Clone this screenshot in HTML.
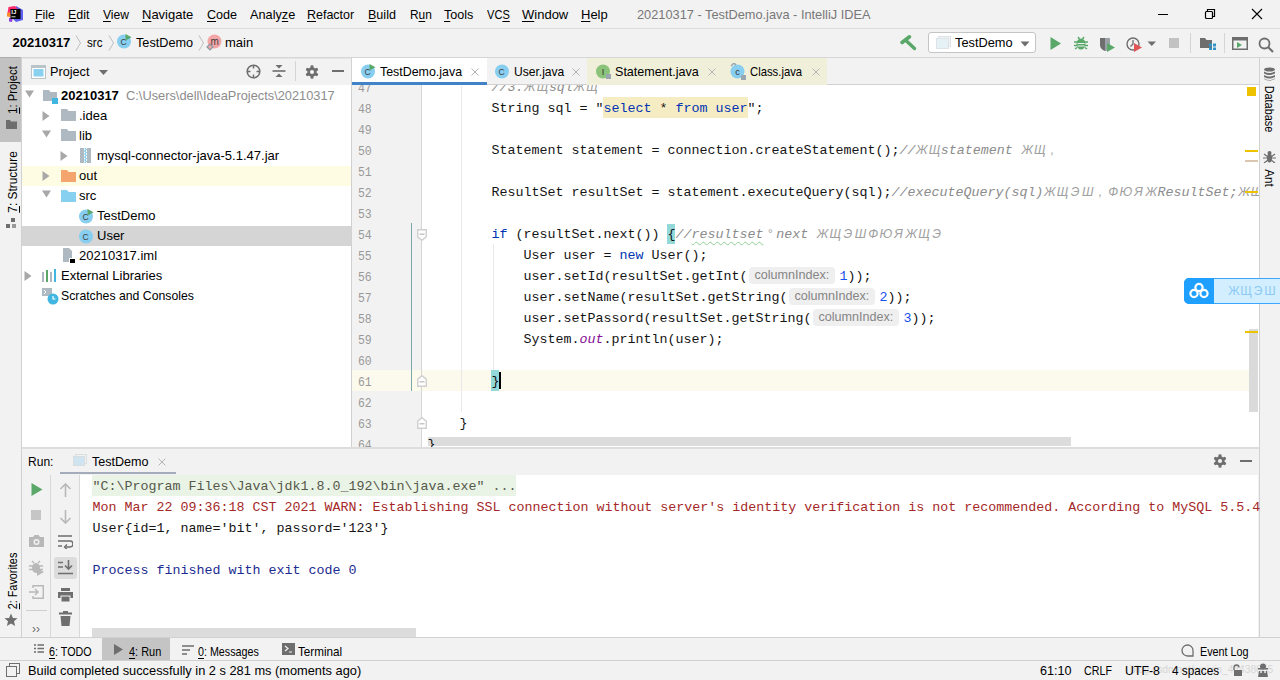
<!DOCTYPE html><html><head><meta charset="utf-8"><style>
html,body{margin:0;padding:0;width:1280px;height:680px;overflow:hidden;background:#f2f2f2;position:relative;font-family:"Liberation Sans",sans-serif}
.u{text-decoration:underline;text-underline-offset:2px}
.kw{color:#0033b3}.str{color:#067d17}.cm{color:#8c8c8c;font-style:italic;-webkit-text-stroke:0}.num{color:#1750eb}.st{color:#871094;font-style:italic}
.hint{display:inline-block;vertical-align:top;}
</style></head><body>
<div style="position:absolute;left:0px;top:0px;width:1280px;height:28px;background:#f2f2f2;"></div>
<div style="position:absolute;left:0px;top:28px;width:1280px;height:1px;background:#dcdcdc;"></div>
<svg style="position:absolute;left:7px;top:6px;" width="16" height="16" viewBox="0 0 16 16"><path d="M9 0 L16 4 L16 14 L9 16 L6 13 Z" fill="#5d5ff0"/><path d="M1.5 1 L8 0 L10.5 3 L3 9 L0.5 7 Z" fill="#fe2b6b"/><path d="M0 7 L3.5 6 L3.5 11 L0 10.5 Z" fill="#fc8a2c"/><path d="M2 12 L6 11 L5 16 L2 15.5 Z" fill="#9440e0"/>
<rect x="3.5" y="3" width="10" height="10" fill="#000"/><text x="4.3" y="8.4" font-family="Liberation Sans" font-weight="bold" font-size="6" fill="#fff">IJ</text><rect x="4.5" y="10.3" width="4" height="1" fill="#ddd"/></svg>
<div style="position:absolute;left:35px;top:5.49px;font:normal 13px/20px 'Liberation Sans', sans-serif;color:#000;white-space:pre;transform:scaleX(0.9524);transform-origin:0 0;"><span class="u">F</span>ile</div>
<div style="position:absolute;left:68px;top:5.49px;font:normal 13px/20px 'Liberation Sans', sans-serif;color:#000;white-space:pre;transform:scaleX(0.9565);transform-origin:0 0;"><span class="u">E</span>dit</div>
<div style="position:absolute;left:103px;top:5.49px;font:normal 13px/20px 'Liberation Sans', sans-serif;color:#000;white-space:pre;transform:scaleX(0.9310);transform-origin:0 0;"><span class="u">V</span>iew</div>
<div style="position:absolute;left:142px;top:5.49px;font:normal 13px/20px 'Liberation Sans', sans-serif;color:#000;white-space:pre;transform:scaleX(1.0000);transform-origin:0 0;"><span class="u">N</span>avigate</div>
<div style="position:absolute;left:207px;top:5.49px;font:normal 13px/20px 'Liberation Sans', sans-serif;color:#000;white-space:pre;transform:scaleX(0.9677);transform-origin:0 0;"><span class="u">C</span>ode</div>
<div style="position:absolute;left:250px;top:5.49px;font:normal 13px/20px 'Liberation Sans', sans-serif;color:#000;white-space:pre;transform:scaleX(0.9783);transform-origin:0 0;">Analy<span class="u">z</span>e</div>
<div style="position:absolute;left:307px;top:5.49px;font:normal 13px/20px 'Liberation Sans', sans-serif;color:#000;white-space:pre;transform:scaleX(0.9600);transform-origin:0 0;"><span class="u">R</span>efactor</div>
<div style="position:absolute;left:368px;top:5.49px;font:normal 13px/20px 'Liberation Sans', sans-serif;color:#000;white-space:pre;transform:scaleX(0.9655);transform-origin:0 0;"><span class="u">B</span>uild</div>
<div style="position:absolute;left:410px;top:5.49px;font:normal 13px/20px 'Liberation Sans', sans-serif;color:#000;white-space:pre;transform:scaleX(0.9167);transform-origin:0 0;">R<span class="u">u</span>n</div>
<div style="position:absolute;left:444px;top:5.49px;font:normal 13px/20px 'Liberation Sans', sans-serif;color:#000;white-space:pre;transform:scaleX(0.9677);transform-origin:0 0;"><span class="u">T</span>ools</div>
<div style="position:absolute;left:487px;top:5.49px;font:normal 13px/20px 'Liberation Sans', sans-serif;color:#000;white-space:pre;transform:scaleX(0.8519);transform-origin:0 0;">VC<span class="u">S</span></div>
<div style="position:absolute;left:522px;top:5.49px;font:normal 13px/20px 'Liberation Sans', sans-serif;color:#000;white-space:pre;transform:scaleX(1.0000);transform-origin:0 0;"><span class="u">W</span>indow</div>
<div style="position:absolute;left:581px;top:5.49px;font:normal 13px/20px 'Liberation Sans', sans-serif;color:#000;white-space:pre;transform:scaleX(1.0000);transform-origin:0 0;"><span class="u">H</span>elp</div>
<div style="position:absolute;left:637px;top:5.49px;font:normal 13px/20px 'Liberation Sans', sans-serif;color:#787878;white-space:pre;transform:scaleX(0.9832);transform-origin:0 0;">20210317 - TestDemo.java - IntelliJ IDEA</div>
<svg style="position:absolute;left:1150px;top:6px;" width="130" height="18" viewBox="0 0 130 18"><line x1="8" y1="8.5" x2="18" y2="8.5" stroke="#000" stroke-width="1"/>
<rect x="55.5" y="5.5" width="7" height="7" fill="none" stroke="#000" stroke-width="1.2" rx="1"/><path d="M57.5 5.5 V3.5 H64.5 V10.5 H62.5" fill="none" stroke="#000" stroke-width="1.2"/>
<path d="M102 3 L112 13 M112 3 L102 13" stroke="#000" stroke-width="1.1"/></svg>
<div style="position:absolute;left:0px;top:57px;width:1280px;height:1px;background:#d6d6d6;"></div>
<div style="position:absolute;left:12.5px;top:33.49px;font:bold 13px/20px 'Liberation Sans', sans-serif;color:#000;white-space:pre;">20210317</div>
<svg style="position:absolute;left:74.5px;top:35px;" width="7" height="16" viewBox="0 0 7 16"><path d="M1 0.5 L5.5 8 L1 15.5" fill="none" stroke="#bdbdbd" stroke-width="1"/></svg>
<div style="position:absolute;left:87px;top:33.49px;font:normal 13px/20px 'Liberation Sans', sans-serif;color:#000;white-space:pre;transform:scaleX(0.8889);transform-origin:0 0;">src</div>
<svg style="position:absolute;left:107.5px;top:35px;" width="7" height="16" viewBox="0 0 7 16"><path d="M1 0.5 L5.5 8 L1 15.5" fill="none" stroke="#bdbdbd" stroke-width="1"/></svg>
<svg style="position:absolute;left:117px;top:34px;" width="15" height="15" viewBox="0 0 15 15"><circle cx="7" cy="7.5" r="7" fill="#87cef0"/><text x="6.6" y="10.8" text-anchor="middle" font-family="Liberation Sans" font-size="8.5" fill="#3d3d3d">C</text><path d="M8.5 0 L14.5 3.3 L8.5 6.6 Z" fill="#59a869"/></svg>
<div style="position:absolute;left:135.5px;top:33.49px;font:normal 13px/20px 'Liberation Sans', sans-serif;color:#000;white-space:pre;transform:scaleX(0.9746);transform-origin:0 0;">TestDemo</div>
<svg style="position:absolute;left:197.5px;top:35px;" width="7" height="16" viewBox="0 0 7 16"><path d="M1 0.5 L5.5 8 L1 15.5" fill="none" stroke="#bdbdbd" stroke-width="1"/></svg>
<svg style="position:absolute;left:206px;top:34px;" width="17" height="17" viewBox="0 0 17 17"><circle cx="8.5" cy="7.5" r="7" fill="#f4a6a6"/><text x="8.7" y="10.6" text-anchor="middle" font-family="Liberation Sans" font-size="10" fill="#3d3d3d">m</text><path d="M1 13 L4 10 L7 13 L4 16Z" fill="#f4a6a6" stroke="#8a9aa4" stroke-width="1.2"/></svg>
<div style="position:absolute;left:225px;top:33.49px;font:normal 13px/20px 'Liberation Sans', sans-serif;color:#000;white-space:pre;">main</div>
<svg style="position:absolute;left:896px;top:32px;" width="24" height="22" viewBox="0 0 24 22"><path d="M6 10.5 L13.5 4.8" stroke="#59a869" stroke-width="3.6" stroke-linecap="round"/><path d="M10 8.5 L18.5 16.5" stroke="#59a869" stroke-width="3.4" stroke-linecap="round"/></svg>
<div style="position:absolute;left:928px;top:32px;width:108px;height:21px;background:#fff;box-sizing:border-box;border:1px solid #c4c4c4;border-radius:3px"></div>
<svg style="position:absolute;left:936px;top:36px;" width="15" height="13" viewBox="0 0 15 13"><rect x="2.5" y="0.5" width="12" height="10" fill="#f2f2f2" stroke="#dde3e6"/><rect x="0.5" y="2.5" width="12" height="10" fill="#e6f1f6" stroke="#dde3e6"/></svg>
<div style="position:absolute;left:955px;top:33.49px;font:normal 13px/20px 'Liberation Sans', sans-serif;color:#000;white-space:pre;transform:scaleX(0.9831);transform-origin:0 0;">TestDemo</div>
<svg style="position:absolute;left:1020px;top:41px;" width="10" height="6" viewBox="0 0 10 6"><path d="M0.5 0.5 H9.5 L5 5.5 Z" fill="#6e6e6e"/></svg>
<svg style="position:absolute;left:1050px;top:37px;" width="12" height="13" viewBox="0 0 12 13"><path d="M0.5 0 L11 6.5 L0.5 13 Z" fill="#59a869"/></svg>
<svg style="position:absolute;left:1074px;top:36px;" width="14" height="14" viewBox="0 0 14 14"><path d="M4 1 L5.5 3 M10 1 L8.5 3" stroke="#59a869" stroke-width="1.5"/><ellipse cx="7" cy="8" rx="4.5" ry="5.5" fill="#59a869"/><path d="M0 6 H14 M0 9.5 H14 M1 13 L3 11.5 M13 13 L11 11.5" stroke="#59a869" stroke-width="1.4"/><path d="M3.5 7.5 H10.5 M3.5 10 H10.5" stroke="#f2f2f2" stroke-width="1"/></svg>
<svg style="position:absolute;left:1099px;top:37px;" width="17" height="15" viewBox="0 0 17 15"><path d="M1 1 H11 V8 Q11 12 6 14 Q1 12 1 8 Z" fill="#6e6e6e"/><path d="M6 1 H11 V8 Q11 12 6 14 Z" fill="#9aa0a6"/><path d="M8 6 L16 10.5 L8 15 Z" fill="#59a869"/></svg>
<svg style="position:absolute;left:1126px;top:37px;" width="17" height="15" viewBox="0 0 17 15"><circle cx="7" cy="7" r="6" fill="none" stroke="#6e6e6e" stroke-width="1.4"/><path d="M7 3 V7 L4.5 9.5" stroke="#6e6e6e" stroke-width="1.3" fill="none"/><path d="M8 6 L16 10.5 L8 15 Z" fill="#e05555"/></svg>
<svg style="position:absolute;left:1147px;top:41px;" width="10" height="6" viewBox="0 0 10 6"><path d="M0.5 0.5 H9 L4.75 5 Z" fill="#6e6e6e"/></svg>
<div style="position:absolute;left:1169px;top:38px;width:10px;height:10px;background:#c2c2c2;"></div>
<div style="position:absolute;left:1190px;top:33px;width:1px;height:20px;background:#d4d4d4;"></div>
<svg style="position:absolute;left:1200px;top:37px;" width="16" height="13" viewBox="0 0 16 13"><path d="M0 1 H5 L6.5 3 H12 V11 H0 Z" fill="#6e6e6e"/><rect x="9" y="6.5" width="3" height="3" fill="#3592c4"/><rect x="13" y="6.5" width="3" height="3" fill="#3592c4"/><rect x="9" y="10.5" width="3" height="3" fill="#3592c4"/><rect x="13" y="10.5" width="3" height="3" fill="#3592c4"/></svg>
<div style="position:absolute;left:1224px;top:33px;width:1px;height:20px;background:#d4d4d4;"></div>
<svg style="position:absolute;left:1232px;top:37px;" width="16" height="13" viewBox="0 0 16 13"><rect x="0.75" y="0.75" width="14.5" height="11.5" fill="none" stroke="#6e6e6e" stroke-width="1.5"/><rect x="1" y="1" width="14" height="2.5" fill="#6e6e6e"/><path d="M5 5 L10 8 L5 11 Z" fill="#59a869"/></svg>
<svg style="position:absolute;left:1258px;top:37px;" width="16" height="16" viewBox="0 0 16 16"><circle cx="6.5" cy="6.5" r="5" fill="none" stroke="#6e6e6e" stroke-width="1.8"/><path d="M10 10 L15 15" stroke="#6e6e6e" stroke-width="2.2"/></svg>
<div style="position:absolute;left:0px;top:58px;width:21px;height:580px;background:#f2f2f2;"></div>
<div style="position:absolute;left:21px;top:58px;width:1px;height:580px;background:#d1d1d1;"></div>
<div style="position:absolute;left:0px;top:57px;width:21px;height:85px;background:#c2c2c2;"></div>
<div style="position:absolute;left:0px;top:57px;width:21px;height:1px;background:#adadad;"></div>
<div style="position:absolute;left:12.5px;top:89.8px;width:0;height:0"><div style="position:absolute;left:0;top:0;transform:rotate(-90deg) scaleX(0.8655) translate(-50%,-50%);transform-origin:0 0;font:13px/20px 'Liberation Sans', sans-serif;color:#000;white-space:pre"><span class="u">1</span>: Project</div></div>
<svg style="position:absolute;left:6px;top:120px;" width="12" height="10" viewBox="0 0 12 10"><path d="M0 0 H4 L5 1.5 H11 V9 H0 Z" fill="#6e6e6e"/></svg>
<div style="position:absolute;left:12.5px;top:182.4px;width:0;height:0"><div style="position:absolute;left:0;top:0;transform:rotate(-90deg) scaleX(0.9149) translate(-50%,-50%);transform-origin:0 0;font:13px/20px 'Liberation Sans', sans-serif;color:#000;white-space:pre"><span class="u">7</span>: Structure</div></div>
<svg style="position:absolute;left:6px;top:218px;" width="12" height="11" viewBox="0 0 12 11"><rect x="5" y="0" width="4" height="4" fill="#6e6e6e"/><rect x="0" y="6" width="4" height="4" fill="#6e6e6e"/><rect x="6" y="6" width="4" height="4" fill="#9a9a9a"/></svg>
<div style="position:absolute;left:12.5px;top:580.7px;width:0;height:0"><div style="position:absolute;left:0;top:0;transform:rotate(-90deg) scaleX(0.8338) translate(-50%,-50%);transform-origin:0 0;font:13px/20px 'Liberation Sans', sans-serif;color:#000;white-space:pre"><span class="u">2</span>: Favorites</div></div>
<svg style="position:absolute;left:4px;top:613px;" width="14" height="14" viewBox="0 0 14 14"><path d="M7 0.5 L8.9 5 L13.5 5.3 L10 8.3 L11.1 13 L7 10.5 L2.9 13 L4 8.3 L0.5 5.3 L5.1 5 Z" fill="#6e6e6e"/></svg>
<div style="position:absolute;left:22px;top:58px;width:329px;height:27px;background:#f2f2f2;"></div>
<div style="position:absolute;left:22px;top:58px;width:329px;height:1px;background:#e6e6e6;"></div>
<div style="position:absolute;left:22px;top:85px;width:329px;height:362px;background:#ffffff;"></div>
<div style="position:absolute;left:351px;top:58px;width:1px;height:389px;background:#d1d1d1;"></div>
<svg style="position:absolute;left:31px;top:65px;" width="15" height="14" viewBox="0 0 15 14"><rect x="0.5" y="0.5" width="14" height="13" fill="#fff" stroke="#b9c4c8"/><rect x="0.5" y="0.5" width="14" height="2.5" fill="#b9c4c8"/><rect x="2.5" y="4" width="10" height="7.5" fill="#89d1ef"/></svg>
<div style="position:absolute;left:50px;top:62.49px;font:normal 13px/20px 'Liberation Sans', sans-serif;color:#000;white-space:pre;transform:scaleX(0.9756);transform-origin:0 0;">Project</div>
<svg style="position:absolute;left:99px;top:70px;" width="9" height="5" viewBox="0 0 9 5"><path d="M0 0 H9 L4.5 5 Z" fill="#6e6e6e"/></svg>
<svg style="position:absolute;left:245px;top:63px;" width="17" height="17" viewBox="0 0 17 17"><circle cx="8.5" cy="8.5" r="6.3" fill="none" stroke="#6e6e6e" stroke-width="1.6"/><path d="M8.5 2 V5.5 M8.5 11.5 V15 M2 8.5 H5.5 M11.5 8.5 H15" stroke="#6e6e6e" stroke-width="1.5"/></svg>
<svg style="position:absolute;left:272px;top:63px;" width="14" height="16" viewBox="0 0 14 16"><path d="M3.5 2 H10.5 L7 5.5 Z M3.5 14 H10.5 L7 10.5 Z" fill="#6e6e6e"/><rect x="0.5" y="7.2" width="13" height="1.6" fill="#6e6e6e"/></svg>
<div style="position:absolute;left:295px;top:61px;width:1px;height:20px;background:#d4d4d4;"></div>
<svg style="position:absolute;left:305px;top:64.5px;" width="14" height="14" viewBox="0 0 14 14"><rect x="5.7" y="0.6" width="2.6" height="12.8" fill="#6e6e6e" transform="rotate(0 7 7)"/><rect x="5.7" y="0.6" width="2.6" height="12.8" fill="#6e6e6e" transform="rotate(60 7 7)"/><rect x="5.7" y="0.6" width="2.6" height="12.8" fill="#6e6e6e" transform="rotate(120 7 7)"/><rect x="5.7" y="0.6" width="2.6" height="12.8" fill="#6e6e6e" transform="rotate(180 7 7)"/><rect x="5.7" y="0.6" width="2.6" height="12.8" fill="#6e6e6e" transform="rotate(240 7 7)"/><rect x="5.7" y="0.6" width="2.6" height="12.8" fill="#6e6e6e" transform="rotate(300 7 7)"/><circle cx="7" cy="7" r="4.7" fill="#6e6e6e"/><circle cx="7" cy="7" r="2.1" fill="#f2f2f2"/></svg>
<div style="position:absolute;left:332px;top:70px;width:12px;height:2px;background:#6e6e6e;"></div>
<div style="position:absolute;left:22px;top:166px;width:329px;height:20px;background:#fefde3;"></div>
<div style="position:absolute;left:22px;top:226px;width:329px;height:20px;background:#d5d5d5;"></div>
<svg style="position:absolute;left:25px;top:90px;" width="9" height="8" viewBox="0 0 9 8"><path d="M0 0.5 H9 L4.5 7.5 Z" fill="#a8a8a8"/></svg>
<svg style="position:absolute;left:43px;top:90px;" width="16" height="15" viewBox="0 0 16 15"><path d="M0 0 H6 L7.5 2 H14 V11 H0 Z" fill="#afb9c1"/><rect x="9" y="8" width="6" height="6" fill="#40b6e0"/></svg>
<div style="position:absolute;left:61px;top:86.49px;font:bold 13px/20px 'Liberation Sans', sans-serif;color:#000;white-space:pre;">20210317</div>
<div style="position:absolute;left:126px;top:86.49px;font:normal 13px/20px 'Liberation Sans', sans-serif;color:#8c8c8c;white-space:pre;transform:scaleX(0.9858);transform-origin:0 0;">C:\Users\dell\IdeaProjects\20210317</div>
<svg style="position:absolute;left:42px;top:111px;" width="8" height="10" viewBox="0 0 8 10"><path d="M0.5 0 L7.5 5 L0.5 10 Z" fill="#a8a8a8"/></svg>
<svg style="position:absolute;left:61px;top:109px;" width="15" height="12" viewBox="0 0 15 12"><path d="M0 0 H6 L7.5 2 H15 V12 H0 Z" fill="#afb9c1"/></svg>
<div style="position:absolute;left:79px;top:106.49px;font:normal 13px/20px 'Liberation Sans', sans-serif;color:#000;white-space:pre;">.idea</div>
<svg style="position:absolute;left:42px;top:130px;" width="9" height="8" viewBox="0 0 9 8"><path d="M0 0.5 H9 L4.5 7.5 Z" fill="#a8a8a8"/></svg>
<svg style="position:absolute;left:61px;top:129px;" width="15" height="12" viewBox="0 0 15 12"><path d="M0 0 H6 L7.5 2 H15 V12 H0 Z" fill="#afb9c1"/></svg>
<div style="position:absolute;left:79px;top:126.49px;font:normal 13px/20px 'Liberation Sans', sans-serif;color:#000;white-space:pre;">lib</div>
<svg style="position:absolute;left:60px;top:151px;" width="8" height="10" viewBox="0 0 8 10"><path d="M0.5 0 L7.5 5 L0.5 10 Z" fill="#a8a8a8"/></svg>
<svg style="position:absolute;left:80px;top:148px;" width="12" height="15" viewBox="0 0 12 15"><rect x="0" y="0" width="11" height="15" fill="#afb9c1"/><rect x="4" y="0" width="3" height="15" fill="#fff"/><path d="M4.5 0 L6.5 1.5 L4.5 3 L6.5 4.5 L4.5 6 L6.5 7.5 L4.5 9 L6.5 10.5 L4.5 12 L6.5 13.5 L4.5 15" stroke="#40b6e0" stroke-width="0.9" fill="none"/></svg>
<div style="position:absolute;left:97px;top:146.49px;font:normal 13px/20px 'Liberation Sans', sans-serif;color:#000;white-space:pre;">mysql-connector-java-5.1.47.jar</div>
<svg style="position:absolute;left:42px;top:171px;" width="8" height="10" viewBox="0 0 8 10"><path d="M0.5 0 L7.5 5 L0.5 10 Z" fill="#a8a8a8"/></svg>
<svg style="position:absolute;left:61px;top:170px;" width="15" height="12" viewBox="0 0 15 12"><path d="M0 0 H6 L7.5 2 H15 V12 H0 Z" fill="#f4a56e"/></svg>
<div style="position:absolute;left:79px;top:166.49px;font:normal 13px/20px 'Liberation Sans', sans-serif;color:#000;white-space:pre;">out</div>
<svg style="position:absolute;left:42px;top:190px;" width="9" height="8" viewBox="0 0 9 8"><path d="M0 0.5 H9 L4.5 7.5 Z" fill="#a8a8a8"/></svg>
<svg style="position:absolute;left:61px;top:190px;" width="15" height="12" viewBox="0 0 15 12"><path d="M0 0 H6 L7.5 2 H15 V12 H0 Z" fill="#88d0f0"/></svg>
<div style="position:absolute;left:79px;top:186.49px;font:normal 13px/20px 'Liberation Sans', sans-serif;color:#000;white-space:pre;">src</div>
<svg style="position:absolute;left:79px;top:209px;" width="15" height="15" viewBox="0 0 15 15"><circle cx="7" cy="7.5" r="7" fill="#87cef0"/><text x="6.6" y="10.8" text-anchor="middle" font-family="Liberation Sans" font-size="8.5" fill="#3d3d3d">C</text><path d="M8.5 0 L14.5 3.3 L8.5 6.6 Z" fill="#59a869"/></svg>
<div style="position:absolute;left:97px;top:206.49px;font:normal 13px/20px 'Liberation Sans', sans-serif;color:#000;white-space:pre;">TestDemo</div>
<svg style="position:absolute;left:79px;top:229px;" width="15" height="15" viewBox="0 0 15 15"><circle cx="7" cy="7.5" r="7" fill="#87cef0"/><text x="6.6" y="10.8" text-anchor="middle" font-family="Liberation Sans" font-size="8.5" fill="#3d3d3d">C</text></svg>
<div style="position:absolute;left:97px;top:226.49px;font:normal 13px/20px 'Liberation Sans', sans-serif;color:#000;white-space:pre;">User</div>
<svg style="position:absolute;left:62px;top:248px;" width="14" height="16" viewBox="0 0 14 16"><path d="M1 0 H7 L10 3 V14 H1 Z" fill="#afb9c1"/><rect x="7" y="10" width="7" height="6" fill="#fff"/><rect x="8" y="11" width="5" height="4" fill="#000"/></svg>
<div style="position:absolute;left:79px;top:246.49px;font:normal 13px/20px 'Liberation Sans', sans-serif;color:#000;white-space:pre;">20210317.iml</div>
<svg style="position:absolute;left:24px;top:271px;" width="8" height="10" viewBox="0 0 8 10"><path d="M0.5 0 L7.5 5 L0.5 10 Z" fill="#a8a8a8"/></svg>
<svg style="position:absolute;left:42px;top:269px;" width="16" height="14" viewBox="0 0 16 14"><rect x="0" y="3" width="2" height="10" fill="#afb9c1"/><rect x="4" y="1" width="2" height="12" fill="#59a869"/><rect x="8" y="3" width="2" height="10" fill="#afb9c1"/><rect x="12" y="0" width="2" height="13" fill="#40b6e0"/></svg>
<div style="position:absolute;left:61px;top:266.49px;font:normal 13px/20px 'Liberation Sans', sans-serif;color:#000;white-space:pre;">External Libraries</div>
<svg style="position:absolute;left:42px;top:288px;" width="17" height="17" viewBox="0 0 17 17"><path d="M0 0 H10 V8 H0 Z" fill="#afb9c1"/><path d="M2 2 L4 4 L2 6" stroke="#fff" fill="none"/><circle cx="11" cy="11" r="5.5" fill="#40b6e0"/><path d="M11 8 V11 H13.5" stroke="#fff" fill="none" stroke-width="1.2"/></svg>
<div style="position:absolute;left:61px;top:286.49px;font:normal 13px/20px 'Liberation Sans', sans-serif;color:#000;white-space:pre;transform:scaleX(0.9433);transform-origin:0 0;">Scratches and Consoles</div>
<div style="position:absolute;left:1259px;top:58px;width:1px;height:580px;background:#d1d1d1;"></div>
<div style="position:absolute;left:1260px;top:58px;width:20px;height:580px;background:#f2f2f2;"></div>
<svg style="position:absolute;left:1263px;top:67px;" width="13" height="14" viewBox="0 0 13 14"><ellipse cx="6.5" cy="2.5" rx="5.5" ry="2" fill="#6e6e6e"/><path d="M1 4.5 Q6.5 7.5 12 4.5 V6.5 Q6.5 9.5 1 6.5 Z M1 8 Q6.5 11 12 8 V10 Q6.5 13 1 10 Z M1 11.5 Q6.5 14.5 12 11.5 V12 Q6.5 15 1 12Z" fill="#6e6e6e"/></svg>
<div style="position:absolute;left:1269px;top:109.2px;width:0;height:0"><div style="position:absolute;left:0;top:0;transform:rotate(90deg) scaleX(0.8393) translate(-50%,-50%);transform-origin:0 0;font:13px/20px 'Liberation Sans', sans-serif;color:#000;white-space:pre">Database</div></div>
<svg style="position:absolute;left:1263px;top:151px;" width="13" height="12" viewBox="0 0 13 12"><ellipse cx="6.5" cy="7" rx="2.5" ry="4.5" fill="#6e6e6e"/><circle cx="6.5" cy="2" r="2" fill="#6e6e6e"/><path d="M1 3 L5 6 M12 3 L8 6 M0 7 H13 M1 12 L5 9 M12 12 L8 9" stroke="#6e6e6e" stroke-width="1.2"/></svg>
<div style="position:absolute;left:1269px;top:178.4px;width:0;height:0"><div style="position:absolute;left:0;top:0;transform:rotate(90deg) scaleX(0.9000) translate(-50%,-50%);transform-origin:0 0;font:13px/20px 'Liberation Sans', sans-serif;color:#000;white-space:pre">Ant</div></div>
<div style="position:absolute;left:352px;top:58px;width:907px;height:27px;background:#f2f2f2;"></div>
<div style="position:absolute;left:352px;top:84px;width:907px;height:1px;background:#d1d1d1;"></div>
<div style="position:absolute;left:352px;top:85px;width:907px;height:362px;overflow:hidden"><div style="position:absolute;left:-352px;top:-85px;width:1280px;height:680px">
<div style="position:absolute;left:352px;top:85px;width:907px;height:362px;background:#ffffff;"></div>
<div style="position:absolute;left:352px;top:85px;width:70px;height:362px;background:#f2f2f2;"></div>
<div style="position:absolute;left:352px;top:370px;width:906px;height:21px;background:#fcfaed;"></div>
<div style="position:absolute;left:421px;top:85px;width:1px;height:362px;background:#d6d6d6;"></div>
<div style="position:absolute;left:461px;top:86px;width:1px;height:326px;background:#e8e8e8;"></div>
<div style="position:absolute;left:493px;top:244px;width:1px;height:126px;background:#e8e8e8;"></div>
<div style="position:absolute;left:411px;top:223px;width:1px;height:168px;background:#7ea7ab;"></div>
<svg style="position:absolute;left:417px;top:229px;" width="10" height="12" viewBox="0 0 10 12"><path d="M0.75 0.75 V7.8 L5 11.25 L9.25 7.8 V0.75 Z" fill="#fff" stroke="#cfcfcf" stroke-width="1.4"/><path d="M2.5 5.2 H7.5" stroke="#b8b8b8" stroke-width="1.2"/></svg>
<svg style="position:absolute;left:417px;top:375px;" width="10" height="12" viewBox="0 0 10 12"><path d="M0.75 11.25 V4.2 L5 0.75 L9.25 4.2 V11.25 Z" fill="#fff" stroke="#cfcfcf" stroke-width="1.4"/><path d="M2.5 6.8 H7.5" stroke="#b8b8b8" stroke-width="1.2"/></svg>
<svg style="position:absolute;left:417px;top:417px;" width="10" height="12" viewBox="0 0 10 12"><path d="M0.75 11.25 V4.2 L5 0.75 L9.25 4.2 V11.25 Z" fill="#fff" stroke="#cfcfcf" stroke-width="1.4"/><path d="M2.5 6.8 H7.5" stroke="#b8b8b8" stroke-width="1.2"/></svg>
<div style="position:absolute;left:357.5px;top:78px;width:40px;height:21px;font:13px/21px 'Liberation Mono', monospace;color:#999;white-space:pre;transform:scaleX(0.88);transform-origin:0 0">47</div>
<div style="position:absolute;left:357.5px;top:99px;width:40px;height:21px;font:13px/21px 'Liberation Mono', monospace;color:#999;white-space:pre;transform:scaleX(0.88);transform-origin:0 0">48</div>
<div style="position:absolute;left:357.5px;top:120px;width:40px;height:21px;font:13px/21px 'Liberation Mono', monospace;color:#999;white-space:pre;transform:scaleX(0.88);transform-origin:0 0">49</div>
<div style="position:absolute;left:357.5px;top:141px;width:40px;height:21px;font:13px/21px 'Liberation Mono', monospace;color:#999;white-space:pre;transform:scaleX(0.88);transform-origin:0 0">50</div>
<div style="position:absolute;left:357.5px;top:162px;width:40px;height:21px;font:13px/21px 'Liberation Mono', monospace;color:#999;white-space:pre;transform:scaleX(0.88);transform-origin:0 0">51</div>
<div style="position:absolute;left:357.5px;top:183px;width:40px;height:21px;font:13px/21px 'Liberation Mono', monospace;color:#999;white-space:pre;transform:scaleX(0.88);transform-origin:0 0">52</div>
<div style="position:absolute;left:357.5px;top:204px;width:40px;height:21px;font:13px/21px 'Liberation Mono', monospace;color:#999;white-space:pre;transform:scaleX(0.88);transform-origin:0 0">53</div>
<div style="position:absolute;left:357.5px;top:225px;width:40px;height:21px;font:13px/21px 'Liberation Mono', monospace;color:#999;white-space:pre;transform:scaleX(0.88);transform-origin:0 0">54</div>
<div style="position:absolute;left:357.5px;top:246px;width:40px;height:21px;font:13px/21px 'Liberation Mono', monospace;color:#999;white-space:pre;transform:scaleX(0.88);transform-origin:0 0">55</div>
<div style="position:absolute;left:357.5px;top:267px;width:40px;height:21px;font:13px/21px 'Liberation Mono', monospace;color:#999;white-space:pre;transform:scaleX(0.88);transform-origin:0 0">56</div>
<div style="position:absolute;left:357.5px;top:288px;width:40px;height:21px;font:13px/21px 'Liberation Mono', monospace;color:#999;white-space:pre;transform:scaleX(0.88);transform-origin:0 0">57</div>
<div style="position:absolute;left:357.5px;top:309px;width:40px;height:21px;font:13px/21px 'Liberation Mono', monospace;color:#999;white-space:pre;transform:scaleX(0.88);transform-origin:0 0">58</div>
<div style="position:absolute;left:357.5px;top:330px;width:40px;height:21px;font:13px/21px 'Liberation Mono', monospace;color:#999;white-space:pre;transform:scaleX(0.88);transform-origin:0 0">59</div>
<div style="position:absolute;left:357.5px;top:351px;width:40px;height:21px;font:13px/21px 'Liberation Mono', monospace;color:#999;white-space:pre;transform:scaleX(0.88);transform-origin:0 0">60</div>
<div style="position:absolute;left:357.5px;top:372px;width:40px;height:21px;font:13px/21px 'Liberation Mono', monospace;color:#999;white-space:pre;transform:scaleX(0.88);transform-origin:0 0">61</div>
<div style="position:absolute;left:357.5px;top:393px;width:40px;height:21px;font:13px/21px 'Liberation Mono', monospace;color:#999;white-space:pre;transform:scaleX(0.88);transform-origin:0 0">62</div>
<div style="position:absolute;left:357.5px;top:414px;width:40px;height:21px;font:13px/21px 'Liberation Mono', monospace;color:#999;white-space:pre;transform:scaleX(0.88);transform-origin:0 0">63</div>
<div style="position:absolute;left:357.5px;top:435px;width:40px;height:21px;font:13px/21px 'Liberation Mono', monospace;color:#999;white-space:pre;transform:scaleX(0.88);transform-origin:0 0">64</div>
<div style="position:absolute;left:428px;top:437px;width:643px;height:9px;background:#dcdcdc;"></div>
<div style="position:absolute;left:603px;top:97px;width:145px;height:21px;background:#f6ecc4;"></div>
<div style="position:absolute;left:667px;top:224px;width:8px;height:20px;background:#93d9d9;"></div>
<div style="position:absolute;left:491px;top:370px;width:8px;height:21px;background:#93d9d9;"></div>
<div style="position:absolute;left:427.5px;top:77px;height:21px;font:13.33px/21px 'Liberation Mono', monospace;color:#141414;white-space:pre">        <span class="cm">//3.<span style="display:inline-block;width:12.7px;text-align:center;font-family:'Liberation Sans';font-size:12.5px;color:#a0a0a0;-webkit-text-stroke:0">Ж</span><span style="display:inline-block;width:12.7px;text-align:center;font-family:'Liberation Sans';font-size:12.5px;color:#a0a0a0;-webkit-text-stroke:0">Щ</span>sql<span style="display:inline-block;width:12.7px;text-align:center;font-family:'Liberation Sans';font-size:12.5px;color:#a0a0a0;-webkit-text-stroke:0">Ж</span><span style="display:inline-block;width:12.7px;text-align:center;font-family:'Liberation Sans';font-size:12.5px;color:#a0a0a0;-webkit-text-stroke:0">Щ</span></span></div>
<div style="position:absolute;left:427.5px;top:98px;height:21px;font:13.33px/21px 'Liberation Mono', monospace;color:#141414;white-space:pre">        String sql = "<span style="color:#0033b3">select</span> * <span style="color:#0033b3">from</span> <span style="color:#0033b3">user</span>";</div>
<div style="position:absolute;left:427.5px;top:140px;height:21px;font:13.33px/21px 'Liberation Mono', monospace;color:#141414;white-space:pre">        Statement statement = connection.createStatement();<span class="cm">//<span style="display:inline-block;width:12.7px;text-align:center;font-family:'Liberation Sans';font-size:12.5px;color:#a0a0a0;-webkit-text-stroke:0">Ж</span><span style="display:inline-block;width:12.7px;text-align:center;font-family:'Liberation Sans';font-size:12.5px;color:#a0a0a0;-webkit-text-stroke:0">Щ</span>statement <span style="display:inline-block;width:12.7px;text-align:center;font-family:'Liberation Sans';font-size:12.5px;color:#a0a0a0;-webkit-text-stroke:0">Ж</span><span style="display:inline-block;width:12.7px;text-align:center;font-family:'Liberation Sans';font-size:12.5px;color:#a0a0a0;-webkit-text-stroke:0">Щ</span><span style="display:inline-block;width:12.7px;text-align:center;font-family:'Liberation Sans';font-size:12px;color:#a0a0a0;-webkit-text-stroke:0">,</span></span></div>
<div style="position:absolute;left:427.5px;top:182px;height:21px;font:13.33px/21px 'Liberation Mono', monospace;color:#141414;white-space:pre">        ResultSet resultSet = statement.executeQuery(sql);<span class="cm">//executeQuery(sql)<span style="display:inline-block;width:12.7px;text-align:center;font-family:'Liberation Sans';font-size:12.5px;color:#a0a0a0;-webkit-text-stroke:0">Ж</span><span style="display:inline-block;width:12.7px;text-align:center;font-family:'Liberation Sans';font-size:12.5px;color:#a0a0a0;-webkit-text-stroke:0">Щ</span><span style="display:inline-block;width:12.7px;text-align:center;font-family:'Liberation Sans';font-size:12.5px;color:#a0a0a0;-webkit-text-stroke:0">Э</span><span style="display:inline-block;width:12.7px;text-align:center;font-family:'Liberation Sans';font-size:12.5px;color:#a0a0a0;-webkit-text-stroke:0">Ш</span><span style="display:inline-block;width:12.7px;text-align:center;font-family:'Liberation Sans';font-size:12px;color:#a0a0a0;-webkit-text-stroke:0">,</span><span style="display:inline-block;width:12.7px;text-align:center;font-family:'Liberation Sans';font-size:12.5px;color:#a0a0a0;-webkit-text-stroke:0">Ф</span><span style="display:inline-block;width:12.7px;text-align:center;font-family:'Liberation Sans';font-size:12.5px;color:#a0a0a0;-webkit-text-stroke:0">Ю</span><span style="display:inline-block;width:12.7px;text-align:center;font-family:'Liberation Sans';font-size:12.5px;color:#a0a0a0;-webkit-text-stroke:0">Я</span><span style="display:inline-block;width:12.7px;text-align:center;font-family:'Liberation Sans';font-size:12.5px;color:#a0a0a0;-webkit-text-stroke:0">Ж</span>ResultSet;<span style="display:inline-block;width:12.7px;text-align:center;font-family:'Liberation Sans';font-size:12.5px;color:#a0a0a0;-webkit-text-stroke:0">Ж</span><span style="display:inline-block;width:12.7px;text-align:center;font-family:'Liberation Sans';font-size:12.5px;color:#a0a0a0;-webkit-text-stroke:0">Щ</span><span style="display:inline-block;width:12.7px;text-align:center;font-family:'Liberation Sans';font-size:12.5px;color:#a0a0a0;-webkit-text-stroke:0">Э</span><span style="display:inline-block;width:12.7px;text-align:center;font-family:'Liberation Sans';font-size:12.5px;color:#a0a0a0;-webkit-text-stroke:0">Ш</span></span></div>
<div style="position:absolute;left:427.5px;top:224px;height:21px;font:13.33px/21px 'Liberation Mono', monospace;color:#141414;white-space:pre">        <span class="kw">if</span> (resultSet.next()) {<span class="cm">//<span style="text-decoration:underline wavy #8fcf8f;text-underline-offset:3px;text-decoration-thickness:1px">resultset</span><span style="display:inline-block;width:12.7px;text-align:center;font-family:'Liberation Sans';font-size:12px;color:#a0a0a0;-webkit-text-stroke:0">°</span>next <span style="display:inline-block;width:12.7px;text-align:center;font-family:'Liberation Sans';font-size:12.5px;color:#a0a0a0;-webkit-text-stroke:0">Ж</span><span style="display:inline-block;width:12.7px;text-align:center;font-family:'Liberation Sans';font-size:12.5px;color:#a0a0a0;-webkit-text-stroke:0">Щ</span><span style="display:inline-block;width:12.7px;text-align:center;font-family:'Liberation Sans';font-size:12.5px;color:#a0a0a0;-webkit-text-stroke:0">Э</span><span style="display:inline-block;width:12.7px;text-align:center;font-family:'Liberation Sans';font-size:12.5px;color:#a0a0a0;-webkit-text-stroke:0">Ш</span><span style="display:inline-block;width:12.7px;text-align:center;font-family:'Liberation Sans';font-size:12.5px;color:#a0a0a0;-webkit-text-stroke:0">Ф</span><span style="display:inline-block;width:12.7px;text-align:center;font-family:'Liberation Sans';font-size:12.5px;color:#a0a0a0;-webkit-text-stroke:0">Ю</span><span style="display:inline-block;width:12.7px;text-align:center;font-family:'Liberation Sans';font-size:12.5px;color:#a0a0a0;-webkit-text-stroke:0">Я</span><span style="display:inline-block;width:12.7px;text-align:center;font-family:'Liberation Sans';font-size:12.5px;color:#a0a0a0;-webkit-text-stroke:0">Ж</span><span style="display:inline-block;width:12.7px;text-align:center;font-family:'Liberation Sans';font-size:12.5px;color:#a0a0a0;-webkit-text-stroke:0">Щ</span><span style="display:inline-block;width:12.7px;text-align:center;font-family:'Liberation Sans';font-size:12.5px;color:#a0a0a0;-webkit-text-stroke:0">Э</span></span></div>
<div style="position:absolute;left:427.5px;top:245px;height:21px;font:13.33px/21px 'Liberation Mono', monospace;color:#141414;white-space:pre">            User user = <span class="kw">new</span> User();</div>
<div style="position:absolute;left:427.5px;top:266px;height:21px;font:13.33px/21px 'Liberation Mono', monospace;color:#141414;white-space:pre">            user.setId(resultSet.getInt(<span style="display:inline-block;position:relative;width:92px;height:1px"><span style="position:absolute;left:2px;top:-12px;width:86px;height:17px;background:#efefef;border-radius:4px;font:12.6px/17px 'Liberation Sans', sans-serif;color:#858585;font-style:normal;text-indent:5px;-webkit-text-stroke:0">columnIndex:</span></span><span class="num">1</span>));</div>
<div style="position:absolute;left:427.5px;top:287px;height:21px;font:13.33px/21px 'Liberation Mono', monospace;color:#141414;white-space:pre">            user.setName(resultSet.getString(<span style="display:inline-block;position:relative;width:92px;height:1px"><span style="position:absolute;left:2px;top:-12px;width:86px;height:17px;background:#efefef;border-radius:4px;font:12.6px/17px 'Liberation Sans', sans-serif;color:#858585;font-style:normal;text-indent:5px;-webkit-text-stroke:0">columnIndex:</span></span><span class="num">2</span>));</div>
<div style="position:absolute;left:427.5px;top:308px;height:21px;font:13.33px/21px 'Liberation Mono', monospace;color:#141414;white-space:pre">            user.setPassord(resultSet.getString(<span style="display:inline-block;position:relative;width:92px;height:1px"><span style="position:absolute;left:2px;top:-12px;width:86px;height:17px;background:#efefef;border-radius:4px;font:12.6px/17px 'Liberation Sans', sans-serif;color:#858585;font-style:normal;text-indent:5px;-webkit-text-stroke:0">columnIndex:</span></span><span class="num">3</span>));</div>
<div style="position:absolute;left:427.5px;top:329px;height:21px;font:13.33px/21px 'Liberation Mono', monospace;color:#141414;white-space:pre">            System.<span class="st">out</span>.println(user);</div>
<div style="position:absolute;left:427.5px;top:371px;height:21px;font:13.33px/21px 'Liberation Mono', monospace;color:#141414;white-space:pre">        }</div>
<div style="position:absolute;left:427.5px;top:413px;height:21px;font:13.33px/21px 'Liberation Mono', monospace;color:#141414;white-space:pre">    }</div>
<div style="position:absolute;left:427.5px;top:434px;height:21px;font:13.33px/21px 'Liberation Mono', monospace;color:#141414;white-space:pre">}</div>
<div style="position:absolute;left:499px;top:372px;width:2px;height:17px;background:#000;"></div>
</div></div>
<div style="position:absolute;left:352px;top:58px;width:135px;height:24px;background:#ffffff;"></div>
<div style="position:absolute;left:352px;top:82px;width:135px;height:3px;background:#4083c9;"></div>
<div style="position:absolute;left:587px;top:58px;width:240px;height:27px;background:#f0efd9;"></div>
<svg style="position:absolute;left:361px;top:64px;" width="15" height="15" viewBox="0 0 15 15"><circle cx="7" cy="7.5" r="7" fill="#87cef0"/><text x="6.6" y="10.8" text-anchor="middle" font-family="Liberation Sans" font-size="8.5" fill="#3d3d3d">C</text><path d="M8.5 0 L14.5 3.3 L8.5 6.6 Z" fill="#59a869"/></svg>
<div style="position:absolute;left:380px;top:62.49px;font:normal 13px/20px 'Liberation Sans', sans-serif;color:#000;white-space:pre;transform:scaleX(0.9540);transform-origin:0 0;">TestDemo.java</div>
<svg style="position:absolute;left:470.5px;top:67.5px;" width="9" height="9" viewBox="0 0 9 9"><path d="M0.5 0.5 L7.5 7.5 M7.5 0.5 L0.5 7.5" stroke="#b4b4b4" stroke-width="1"/></svg>
<svg style="position:absolute;left:495px;top:64px;" width="15" height="15" viewBox="0 0 15 15"><circle cx="7" cy="7.5" r="7" fill="#87cef0"/><text x="6.6" y="10.8" text-anchor="middle" font-family="Liberation Sans" font-size="8.5" fill="#3d3d3d">C</text></svg>
<div style="position:absolute;left:514px;top:62.49px;font:normal 13px/20px 'Liberation Sans', sans-serif;color:#000;white-space:pre;transform:scaleX(0.9273);transform-origin:0 0;">User.java</div>
<svg style="position:absolute;left:571.5px;top:67.5px;" width="9" height="9" viewBox="0 0 9 9"><path d="M0.5 0.5 L7.5 7.5 M7.5 0.5 L0.5 7.5" stroke="#b4b4b4" stroke-width="1"/></svg>
<svg style="position:absolute;left:596px;top:64px;" width="16" height="16" viewBox="0 0 16 16"><circle cx="7" cy="7.5" r="7" fill="#8bc37a"/><text x="7" y="10.5" text-anchor="middle" font-family="Liberation Sans" font-size="9" fill="#333">I</text><rect x="10" y="10" width="5" height="5" fill="#9aa7b0"/></svg>
<div style="position:absolute;left:615px;top:62.49px;font:normal 13px/20px 'Liberation Sans', sans-serif;color:#000;white-space:pre;transform:scaleX(0.9659);transform-origin:0 0;">Statement.java</div>
<svg style="position:absolute;left:707.5px;top:67.5px;" width="9" height="9" viewBox="0 0 9 9"><path d="M0.5 0.5 L7.5 7.5 M7.5 0.5 L0.5 7.5" stroke="#b4b4b4" stroke-width="1"/></svg>
<svg style="position:absolute;left:730px;top:63px;" width="16" height="17" viewBox="0 0 16 17"><circle cx="7.5" cy="8.5" r="7" fill="#87cef0"/><text x="7.5" y="11.5" text-anchor="middle" font-family="Liberation Sans" font-size="9" fill="#333">c</text><path d="M1 3 L4 0 L6 2" stroke="#9aa7b0" stroke-width="1.5" fill="none"/><rect x="11" y="12" width="5" height="5" fill="#9aa7b0"/></svg>
<div style="position:absolute;left:750px;top:62.49px;font:normal 13px/20px 'Liberation Sans', sans-serif;color:#000;white-space:pre;transform:scaleX(0.8689);transform-origin:0 0;">Class.java</div>
<svg style="position:absolute;left:811.5px;top:67.5px;" width="9" height="9" viewBox="0 0 9 9"><path d="M0.5 0.5 L7.5 7.5 M7.5 0.5 L0.5 7.5" stroke="#b4b4b4" stroke-width="1"/></svg>
<div style="position:absolute;left:1249px;top:329px;width:9px;height:83px;background:#dadada;"></div>
<div style="position:absolute;left:1247px;top:87px;width:9px;height:9px;background:#edc200;"></div>
<div style="position:absolute;left:1245px;top:150px;width:13px;height:2px;background:#edc200;"></div>
<div style="position:absolute;left:1245px;top:160px;width:13px;height:2px;background:#d9c6b0;"></div>
<div style="position:absolute;left:1245px;top:191px;width:13px;height:2px;background:#edc200;"></div>
<div style="position:absolute;left:1245px;top:331px;width:13px;height:2px;background:#edc200;"></div>
<div style="position:absolute;left:1184px;top:278px;width:100px;height:26px;background:#d3efff;border:1px solid #3aa6ff;border-radius:5px;box-sizing:border-box"></div>
<div style="position:absolute;left:1184px;top:278px;width:30px;height:26px;background:#1f9fff;border-radius:5px 0 0 5px"></div>
<svg style="position:absolute;left:1189px;top:282px;" width="20" height="18" viewBox="0 0 20 18"><circle cx="10" cy="5.5" r="3.6" fill="none" stroke="#fff" stroke-width="2.2"/><circle cx="5" cy="11.5" r="3.6" fill="none" stroke="#fff" stroke-width="2.2"/><circle cx="15" cy="11.5" r="3.6" fill="none" stroke="#fff" stroke-width="2.2"/></svg>
<div style="position:absolute;left:1228px;top:284px;font:12px/14px 'Liberation Sans', sans-serif;color:#7cc3f5;white-space:pre"><span style="display:inline-block;width:12px;text-align:center;font-family:'Liberation Sans';font-size:12.5px;color:#8dcaf5;-webkit-text-stroke:0">Ж</span><span style="display:inline-block;width:12px;text-align:center;font-family:'Liberation Sans';font-size:12.5px;color:#8dcaf5;-webkit-text-stroke:0">Щ</span><span style="display:inline-block;width:12px;text-align:center;font-family:'Liberation Sans';font-size:12.5px;color:#8dcaf5;-webkit-text-stroke:0">Э</span><span style="display:inline-block;width:12px;text-align:center;font-family:'Liberation Sans';font-size:12.5px;color:#8dcaf5;-webkit-text-stroke:0">Ш</span></div>
<div style="position:absolute;left:22px;top:447px;width:1237px;height:2px;background:#dddddd;"></div>
<div style="position:absolute;left:22px;top:449px;width:1237px;height:26px;background:#f2f2f2;"></div>
<div style="position:absolute;left:28px;top:452.49px;font:normal 13px/20px 'Liberation Sans', sans-serif;color:#000;white-space:pre;transform:scaleX(0.9259);transform-origin:0 0;">Run:</div>
<svg style="position:absolute;left:73px;top:454px;" width="14" height="13" viewBox="0 0 14 13"><rect x="2.5" y="0.5" width="11" height="9" fill="#f2f2f2" stroke="#d8dde0"/><rect x="0.5" y="2.5" width="11" height="9" fill="#cfe3f0" stroke="#d8dde0"/></svg>
<div style="position:absolute;left:92px;top:452.49px;font:normal 13px/20px 'Liberation Sans', sans-serif;color:#000;white-space:pre;transform:scaleX(0.9661);transform-origin:0 0;">TestDemo</div>
<svg style="position:absolute;left:157.5px;top:457.5px;" width="9" height="9" viewBox="0 0 9 9"><path d="M0.5 0.5 L7.5 7.5 M7.5 0.5 L0.5 7.5" stroke="#b4b4b4" stroke-width="1"/></svg>
<div style="position:absolute;left:60px;top:472px;width:116px;height:2px;background:#a4acbc;"></div>
<svg style="position:absolute;left:1213px;top:454px;" width="14" height="14" viewBox="0 0 14 14"><rect x="5.7" y="0.6" width="2.6" height="12.8" fill="#6e6e6e" transform="rotate(0 7 7)"/><rect x="5.7" y="0.6" width="2.6" height="12.8" fill="#6e6e6e" transform="rotate(60 7 7)"/><rect x="5.7" y="0.6" width="2.6" height="12.8" fill="#6e6e6e" transform="rotate(120 7 7)"/><rect x="5.7" y="0.6" width="2.6" height="12.8" fill="#6e6e6e" transform="rotate(180 7 7)"/><rect x="5.7" y="0.6" width="2.6" height="12.8" fill="#6e6e6e" transform="rotate(240 7 7)"/><rect x="5.7" y="0.6" width="2.6" height="12.8" fill="#6e6e6e" transform="rotate(300 7 7)"/><circle cx="7" cy="7" r="4.7" fill="#6e6e6e"/><circle cx="7" cy="7" r="2.1" fill="#f2f2f2"/></svg>
<div style="position:absolute;left:1240px;top:460px;width:12px;height:2px;background:#6e6e6e;"></div>
<div style="position:absolute;left:22px;top:475px;width:29px;height:162px;background:#f2f2f2;"></div>
<div style="position:absolute;left:50px;top:475px;width:1px;height:162px;background:#d8d8d8;"></div>
<div style="position:absolute;left:51px;top:475px;width:28px;height:162px;background:#f2f2f2;"></div>
<div style="position:absolute;left:79px;top:475px;width:1px;height:162px;background:#d8d8d8;"></div>
<div style="position:absolute;left:80px;top:475px;width:1178px;height:162px;background:#ffffff;"></div>
<svg style="position:absolute;left:31px;top:483px;" width="12" height="13" viewBox="0 0 12 13"><path d="M0.5 0 L11.5 6.5 L0.5 13 Z" fill="#59a869"/></svg>
<div style="position:absolute;left:31px;top:510px;width:10px;height:10px;background:#c6c6c6;"></div>
<svg style="position:absolute;left:29px;top:535px;" width="15" height="12" viewBox="0 0 15 12"><path d="M0 2 H4 L5.5 0 H9.5 L11 2 H15 V12 H0 Z" fill="#b8b8b8"/><circle cx="7.5" cy="7" r="3" fill="#f2f2f2"/><circle cx="7.5" cy="7" r="1.6" fill="#b8b8b8"/></svg>
<svg style="position:absolute;left:29px;top:560px;" width="16" height="16" viewBox="0 0 16 16"><ellipse cx="7" cy="8" rx="4" ry="5" fill="#b8b8b8"/><path d="M0 6 H14 M0 9.5 H14 M3 1 L5 3 M11 1 L9 3" stroke="#b8b8b8" stroke-width="1.3"/><path d="M8 8 L15 12 L8 16Z" fill="#b8b8b8"/></svg>
<svg style="position:absolute;left:29px;top:585px;" width="16" height="14" viewBox="0 0 16 14"><path d="M4 3 V0.7 H14.3 V13.3 H4 V11" fill="none" stroke="#b8b8b8" stroke-width="1.4"/><path d="M0 7 H9 M6 4 L9 7 L6 10" fill="none" stroke="#b8b8b8" stroke-width="1.4"/></svg>
<div style="position:absolute;left:26px;top:610px;width:21px;height:1px;background:#cfcfcf;"></div>
<div style="position:absolute;left:32px;top:618.84px;font:normal 12px/20px 'Liberation Sans', sans-serif;color:#6e6e6e;white-space:pre;">&#8250;&#8250;</div>
<svg style="position:absolute;left:59px;top:483px;" width="13" height="15" viewBox="0 0 13 15"><path d="M6.5 1 V14 M1.5 6 L6.5 1 L11.5 6" fill="none" stroke="#b8b8b8" stroke-width="1.6"/></svg>
<svg style="position:absolute;left:59px;top:509px;" width="13" height="15" viewBox="0 0 13 15"><path d="M6.5 1 V14 M1.5 9 L6.5 14 L11.5 9" fill="none" stroke="#b8b8b8" stroke-width="1.6"/></svg>
<svg style="position:absolute;left:58px;top:535px;" width="15" height="14" viewBox="0 0 15 14"><path d="M0 1 H14 M0 6 H12 Q15 6 15 9 Q15 12 12 12 H8" fill="none" stroke="#6e6e6e" stroke-width="1.5"/><path d="M9 9.5 L6.5 12 L9 14.5" fill="none" stroke="#6e6e6e" stroke-width="1.4"/><path d="M0 11 H4" stroke="#6e6e6e" stroke-width="1.5"/></svg>
<div style="position:absolute;left:54px;top:557px;width:23px;height:22px;background:#dcdcdc;border-radius:3px"></div>
<svg style="position:absolute;left:58px;top:560px;" width="15" height="15" viewBox="0 0 15 15"><path d="M0 2.5 H5 M0 7 H5 M0 13.5 H15 M10.5 0 V9 M7 5.5 L10.5 9 L14 5.5" fill="none" stroke="#6e6e6e" stroke-width="1.6"/></svg>
<svg style="position:absolute;left:58px;top:588px;" width="15" height="14" viewBox="0 0 15 14"><rect x="3" y="0" width="9" height="3" fill="#6e6e6e"/><rect x="0" y="4" width="15" height="6" fill="#6e6e6e"/><rect x="3" y="8" width="9" height="6" fill="#6e6e6e" stroke="#f2f2f2" stroke-width="1"/></svg>
<svg style="position:absolute;left:59px;top:611px;" width="13" height="15" viewBox="0 0 13 15"><rect x="0" y="1.5" width="13" height="2" fill="#6e6e6e"/><rect x="4" y="0" width="5" height="2" fill="#6e6e6e"/><path d="M1.5 5 H11.5 L10.5 15 H2.5 Z" fill="#6e6e6e"/></svg>
<div style="position:absolute;left:92px;top:475px;width:424px;height:21px;background:#e9f3e6"></div>
<div style="position:absolute;left:92.5px;top:476px;height:21px;font:13.33px/21px 'Liberation Mono', monospace;color:#55584a;white-space:pre">"C:\Program Files\Java\jdk1.8.0_192\bin\java.exe" ...</div>
<div style="position:absolute;left:92.5px;top:497px;height:21px;font:13.33px/21px 'Liberation Mono', monospace;color:#a52828;white-space:pre">Mon Mar 22 09:36:18 CST 2021 WARN: Establishing SSL connection without server's identity verification is not recommended. According to MySQL 5.5.4</div>
<div style="position:absolute;left:92.5px;top:518px;height:21px;font:13.33px/21px 'Liberation Mono', monospace;color:#141414;white-space:pre">User{id=1, name='bit', passord='123'}</div>
<div style="position:absolute;left:92.5px;top:560px;height:21px;font:13.33px/21px 'Liberation Mono', monospace;color:#1b2b91;white-space:pre">Process finished with exit code 0</div>
<div style="position:absolute;left:92px;top:628px;width:324px;height:9px;background:#dcdcdc;"></div>
<div style="position:absolute;left:0px;top:637px;width:1280px;height:1px;background:#d1d1d1;"></div>
<div style="position:absolute;left:0px;top:638px;width:1280px;height:22px;background:#f2f2f2;"></div>
<div style="position:absolute;left:102px;top:638px;width:68px;height:22px;background:#c4c4c4;"></div>
<svg style="position:absolute;left:34px;top:644px;" width="10" height="10" viewBox="0 0 10 10"><path d="M0 1 H2 M0 4.5 H2 M0 8 H2 M3.5 1 H10 M3.5 4.5 H10 M3.5 8 H10" stroke="#6e6e6e" stroke-width="1.4"/></svg>
<div style="position:absolute;left:49px;top:642.49px;font:normal 13px/20px 'Liberation Sans', sans-serif;color:#000;white-space:pre;transform:scaleX(0.8269);transform-origin:0 0;"><span class="u">6</span>: TODO</div>
<svg style="position:absolute;left:114px;top:644px;" width="9" height="11" viewBox="0 0 9 11"><path d="M0 0 L9 5.5 L0 11Z" fill="#6e6e6e"/></svg>
<div style="position:absolute;left:129px;top:642.49px;font:normal 13px/20px 'Liberation Sans', sans-serif;color:#000;white-space:pre;transform:scaleX(0.8421);transform-origin:0 0;"><span class="u">4</span>: Run</div>
<svg style="position:absolute;left:182px;top:645px;" width="12" height="10" viewBox="0 0 12 10"><path d="M0 1 H12 M0 5 H8 M0 9 H5" stroke="#6e6e6e" stroke-width="1.5"/></svg>
<div style="position:absolute;left:198px;top:642.49px;font:normal 13px/20px 'Liberation Sans', sans-serif;color:#000;white-space:pre;transform:scaleX(0.8243);transform-origin:0 0;"><span class="u">0</span>: Messages</div>
<svg style="position:absolute;left:282px;top:643px;" width="13" height="12" viewBox="0 0 13 12"><rect x="0" y="0" width="13" height="12" fill="#6e6e6e"/><path d="M3 3 L6 5.5 L3 8 M7 9 H10" stroke="#f2f2f2" stroke-width="1.2" fill="none"/></svg>
<div style="position:absolute;left:298px;top:642.49px;font:normal 13px/20px 'Liberation Sans', sans-serif;color:#000;white-space:pre;transform:scaleX(0.8980);transform-origin:0 0;">Terminal</div>
<svg style="position:absolute;left:1181px;top:644px;" width="14" height="14" viewBox="0 0 14 14"><path d="M6.5 1 A5.5 5.5 0 0 0 1 6.5 A5.5 5.5 0 0 0 6.5 12 H12 V6.5 A5.5 5.5 0 0 0 6.5 1 Z" fill="none" stroke="#6e6e6e" stroke-width="1.3"/></svg>
<div style="position:absolute;left:1200px;top:642.49px;font:normal 13px/20px 'Liberation Sans', sans-serif;color:#000;white-space:pre;transform:scaleX(0.8305);transform-origin:0 0;">Event Log</div>
<div style="position:absolute;left:0px;top:660px;width:1280px;height:1px;background:#d1d1d1;"></div>
<div style="position:absolute;left:0px;top:661px;width:1280px;height:19px;background:#f2f2f2;"></div>
<svg style="position:absolute;left:6px;top:663px;" width="14" height="14" viewBox="0 0 14 14"><rect x="3.5" y="0.5" width="10" height="10" fill="none" stroke="#6e6e6e"/><rect x="0.5" y="3.5" width="10" height="10" fill="#f2f2f2" stroke="#6e6e6e"/></svg>
<div style="position:absolute;left:28px;top:661.49px;font:normal 13px/20px 'Liberation Sans', sans-serif;color:#000;white-space:pre;transform:scaleX(0.9852);transform-origin:0 0;">Build completed successfully in 2 s 281 ms (moments ago)</div>
<div style="position:absolute;left:1130px;top:659.19px;font:normal 11px/20px 'Liberation Sans', sans-serif;color:#d6d6d6;white-space:pre;transform:scaleX(0.9286);transform-origin:0 0;">blog.csdn.net/weixin_44438665</div>
<div style="position:absolute;left:1040px;top:661.49px;font:normal 13px/20px 'Liberation Sans', sans-serif;color:#000;white-space:pre;transform:scaleX(0.9697);transform-origin:0 0;">61:10</div>
<div style="position:absolute;left:1084px;top:661.49px;font:normal 13px/20px 'Liberation Sans', sans-serif;color:#000;white-space:pre;transform:scaleX(0.8235);transform-origin:0 0;">CRLF</div>
<div style="position:absolute;left:1125px;top:661.49px;font:normal 13px/20px 'Liberation Sans', sans-serif;color:#000;white-space:pre;transform:scaleX(0.9459);transform-origin:0 0;">UTF-8</div>
<div style="position:absolute;left:1172px;top:661.49px;font:normal 13px/20px 'Liberation Sans', sans-serif;color:#000;white-space:pre;transform:scaleX(0.9057);transform-origin:0 0;">4 spaces</div>
<svg style="position:absolute;left:1232px;top:664px;" width="10" height="12" viewBox="0 0 10 12"><path d="M2 6 V3.5 A2.5 2.5 0 0 1 7 3.5" fill="none" stroke="#6e6e6e" stroke-width="1.3"/><rect x="2" y="6" width="8" height="6" fill="#6e6e6e"/></svg>
<svg style="position:absolute;left:1256px;top:663px;" width="14" height="14" viewBox="0 0 14 14"><circle cx="7" cy="3.5" r="3" fill="#6e6e6e"/><rect x="2" y="5" width="10" height="1.5" fill="#6e6e6e"/><path d="M3 8 H11 L12 14 H2 Z" fill="#6e6e6e"/><circle cx="5" cy="9" r="1" fill="#f2f2f2"/><circle cx="9" cy="9" r="1" fill="#f2f2f2"/></svg>
</body></html>
